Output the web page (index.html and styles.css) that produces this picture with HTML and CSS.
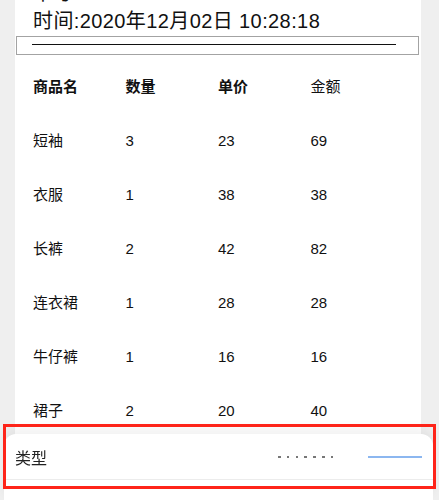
FILE: index.html
```html
<!DOCTYPE html>
<html lang="zh">
<head>
<meta charset="utf-8">
<title>订单</title>
<link rel="stylesheet" href="styles.css">
</head>
<body>
<div class="card">
  <div class="info">
    <div class="info-line">单号:SY/2019/0147565400</div>
    <div class="info-line time">时间:2020年12月02日 10:28:18</div>
  </div>
  <div class="rule-box"><div class="rule"></div></div>
  <table class="goods">
    <thead>
      <tr><th>商品名</th><th>数量</th><th>单价</th><th class="light">金额</th></tr>
    </thead>
    <tbody>
      <tr><td>短袖</td><td>3</td><td>23</td><td>69</td></tr>
      <tr><td>衣服</td><td>1</td><td>38</td><td>38</td></tr>
      <tr><td>长裤</td><td>2</td><td>42</td><td>82</td></tr>
      <tr><td>连衣裙</td><td>1</td><td>28</td><td>28</td></tr>
      <tr><td>牛仔裤</td><td>1</td><td>16</td><td>16</td></tr>
      <tr><td>裙子</td><td>2</td><td>20</td><td>40</td></tr>
    </tbody>
  </table>
</div>

<div class="sheet">
  <div class="sheet-row">
    <span class="sheet-label">类型</span>
    <span class="dots"></span>
    <span class="blue-line"></span>
  </div>
</div>
<div class="highlight"></div>
</body>
</html>
```

FILE: styles.css
```css
html, body {
  margin: 0;
  padding: 0;
}
body {
  background: #efefef;
  font-family: "Liberation Sans", "Noto Sans CJK SC", sans-serif;
  color: #111;
  overflow: hidden;
  height: 500px;
}
.card {
  margin: 0 18px 0 15px;
  background: #fff;
  padding-bottom: 80px;
}
.info {
  margin-top: -21px;
  padding: 0 18px;
  font-size: 20px;
  line-height: 28px;
}
.time {
  letter-spacing: 0.4px;
}
.rule-box {
  margin: 1px 2px 0 1px;
  border: 1px solid #a3a3a3;
  padding: 7px 22px 0 15px;
  box-sizing: content-box;
  height: 10px;
}
.rule {
  border-top: 1px solid #111;
}
.goods {
  width: 370px;
  margin: 5px 18px 0;
  border-collapse: collapse;
  table-layout: fixed;
  font-size: 15px;
}
.goods th, .goods td {
  text-align: left;
  padding: 17px 0;
  line-height: 20px;
  width: 25%;
}
.goods th {
  font-weight: bold;
}
.goods th.light {
  font-weight: normal;
}
.sheet {
  position: fixed;
  left: 4px;
  right: 6px;
  top: 434px;
  bottom: 0;
  background: #fff;
  border-radius: 12px 12px 0 0;
  box-shadow: 0 -6px 10px rgba(0, 0, 0, 0.05);
}
.sheet-row {
  display: flex;
  align-items: center;
  height: 45px;
  border-bottom: 1px solid #ececec;
  padding-left: 11px;
  padding-right: 11px;
}
.sheet-label {
  font-size: 16px;
  color: #222;
  flex: 1;
}
.dots {
  width: 56px;
  height: 2px;
  margin-right: 34px;
  background: repeating-linear-gradient(to right, #777 0 2.5px, transparent 2.5px 8.8px);
}
.blue-line {
  width: 54px;
  height: 2px;
  background: #8cb7f0;
}
.highlight {
  position: fixed;
  left: 3px;
  top: 424px;
  width: 427px;
  height: 59px;
  border: 3px solid #fe2419;
  pointer-events: none;
}
```
